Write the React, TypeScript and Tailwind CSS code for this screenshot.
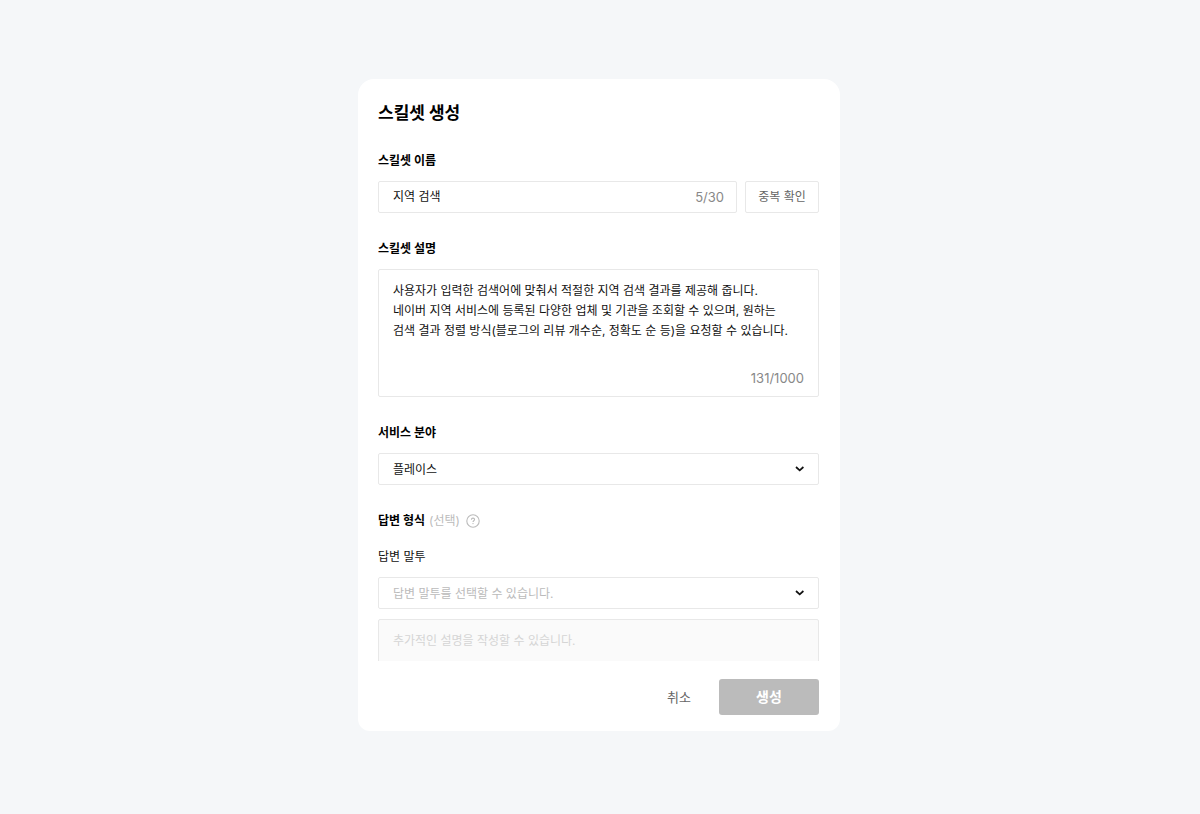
import React, { useState } from 'react';

const DEFAULT_DESCRIPTION = [
  '사용자가 입력한 검색어에 맞춰서 적절한 지역 검색 결과를 제공해 줍니다.',
  '네이버 지역 서비스에 등록된 다양한 업체 및 기관을 조회할 수 있으며, 원하는',
  '검색 결과 정렬 방식(블로그의 리뷰 개수순, 정확도 순 등)을 요청할 수 있습니다.',
].join('\n');

interface SelectBoxProps {
  id: string;
  value: string;
  placeholder?: string;
  options: string[];
  onChange: (value: string) => void;
}

const SelectBox: React.FC<SelectBoxProps> = ({ id, value, placeholder, options, onChange }) => (
  <div className="relative">
    <select
      id={id}
      value={value}
      onChange={(e) => onChange(e.target.value)}
      className={`block h-8 w-full appearance-none rounded-xs border border-[#e8e8e8] bg-white pl-3.5 pr-9 pt-px outline-none ${
        value ? 'text-[#111111]' : 'text-[#bbbbbb]'
      }`}
    >
      {placeholder && <option value="">{placeholder}</option>}
      {options.map((option) => (
        <option key={option} value={option}>
          {option}
        </option>
      ))}
    </select>
    <svg
      className="pointer-events-none absolute inset-y-0 right-3.5 my-auto"
      width="10"
      height="8"
      viewBox="0 0 10 8"
      fill="none"
      stroke="#111111"
      strokeWidth="1.7"
      aria-hidden="true"
    >
      <path d="M1 2 4.7 5.4l3.7-3.4" />
    </svg>
  </div>
);

const HelpIcon: React.FC = () => (
  <svg width="14" height="14" viewBox="0 0 14 14" fill="none" stroke="currentColor" aria-hidden="true">
    <circle cx="7" cy="7" r="6.2" strokeWidth="1.1" />
    <path d="M5.4 5.7c0-1 .7-1.6 1.6-1.6s1.6.6 1.6 1.5c0 1.1-1.6 1.2-1.6 2.3" strokeWidth="1.1" />
    <circle cx="7" cy="9.6" r="0.7" fill="currentColor" stroke="none" />
  </svg>
);

const labelClass = 'block font-bold text-black';

export default function App() {
  const [name, setName] = useState('지역 검색');
  const [description, setDescription] = useState(DEFAULT_DESCRIPTION);
  const [category, setCategory] = useState('플레이스');
  const [tone, setTone] = useState('');

  return (
    <main className="flex min-h-screen items-center justify-center bg-[#f5f7f9] pb-1 pr-0.5 font-['Inter','Noto_Sans_CJK_KR',sans-serif] text-[12px] leading-5 text-[#111111]">
      <form
        onSubmit={(e) => e.preventDefault()}
        className="flex max-h-[652px] w-full max-w-[482px] flex-col rounded-t-2xl rounded-b-xl bg-white pb-4 pl-5 pr-[21px] pt-[21px]"
      >
        <h1 className="text-[17px] font-bold leading-[26px] text-black">스킬셋 생성</h1>

        <div className="mt-[25px] flex min-h-0 flex-col gap-[26px] overflow-y-auto [scrollbar-width:none]">
          <div>
            <label htmlFor="skillset-name" className={labelClass}>
              스킬셋 이름
            </label>
            <div className="mt-2.5 flex gap-2">
              <div className="flex h-8 min-w-0 flex-1 items-center rounded-xs border border-[#e8e8e8] pl-3.5 pr-3">
                <input
                  id="skillset-name"
                  value={name}
                  maxLength={30}
                  onChange={(e) => setName(e.target.value)}
                  className="min-w-0 flex-1 outline-none"
                />
                <span className="text-[13px] text-[#888888]">{name.length}/30</span>
              </div>
              <button type="button" className="h-8 w-[74px] rounded-xs border border-[#e8e8e8] text-[#666666]">
                중복 확인
              </button>
            </div>
          </div>

          <div>
            <label htmlFor="skillset-description" className={labelClass}>
              스킬셋 설명
            </label>
            <div className="mt-2.5 flex h-32 flex-col rounded-xs border border-[#e8e8e8] pb-2 pl-3.5 pt-[11px]">
              <textarea
                id="skillset-description"
                value={description}
                maxLength={1000}
                onChange={(e) => setDescription(e.target.value)}
                className="min-h-0 flex-1 resize-none outline-none [scrollbar-width:none]"
              />
              <span className="pr-3.5 text-right text-[13px] text-[#888888]">131/1000</span>
            </div>
          </div>

          <div>
            <label htmlFor="service-category" className={labelClass}>
              서비스 분야
            </label>
            <div className="mt-2.5">
              <SelectBox
                id="service-category"
                value={category}
                options={['플레이스', '쇼핑', '블로그']}
                onChange={setCategory}
              />
            </div>
          </div>

          <div>
            <div className="flex items-center">
              <h2 className={labelClass}>답변 형식</h2>
              <span className="ml-1 text-[#bbbbbb]">(선택)</span>
              <button type="button" aria-label="답변 형식 도움말" className="ml-1.5 text-[#bbbbbb]">
                <HelpIcon />
              </button>
            </div>
            <label htmlFor="answer-tone" className="mt-4 block">
              답변 말투
            </label>
            <div className="mt-2.5">
              <SelectBox
                id="answer-tone"
                value={tone}
                placeholder="답변 말투를 선택할 수 있습니다."
                options={['친절한 말투', '간결한 말투']}
                onChange={setTone}
              />
            </div>
            <textarea
              aria-label="답변 말투 추가 설명"
              disabled={!tone}
              placeholder="추가적인 설명을 작성할 수 있습니다."
              className="mt-2.5 block h-32 w-full resize-none rounded-xs border border-[#e8e8e8] px-3.5 py-[11px] outline-none placeholder:text-[#bbbbbb] disabled:bg-[#fafafa] disabled:placeholder:text-[#d5d5d5]"
            />
          </div>
        </div>

        <div className="flex shrink-0 justify-end gap-2 pt-[18px]">
          <button type="button" className="h-9 w-16 text-[13px] text-[#666666]">
            취소
          </button>
          <button type="submit" className="h-9 w-[100px] rounded-[3px] bg-[#bbbbbb] text-[14px] font-bold text-white">
            생성
          </button>
        </div>
      </form>
    </main>
  );
}
